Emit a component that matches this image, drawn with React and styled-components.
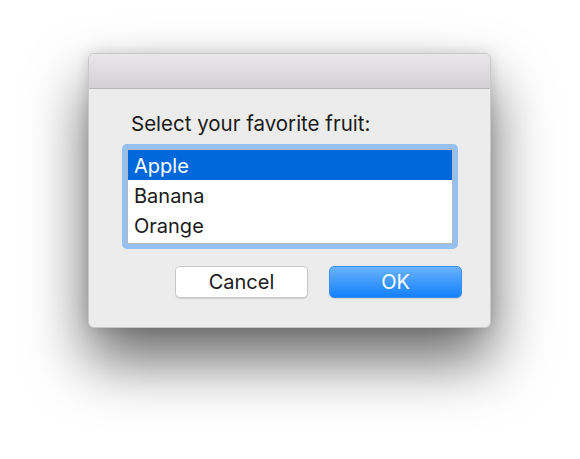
import React from 'react';
import styled, { createGlobalStyle } from 'styled-components';

const GlobalStyle = createGlobalStyle`
  html, body {
    margin: 0;
    padding: 0;
    background: #ffffff;
  }
  body {
    font-family: Inter, "Liberation Sans", sans-serif;
    -webkit-font-smoothing: antialiased;
  }
`;

const Stage = styled.div`
  width: 580px;
  height: 459px;
  padding: 53px 0 0 88px;
  box-sizing: border-box;
  overflow: hidden;
`;

const Window = styled.div`
  width: 403px;
  height: 275px;
  box-sizing: border-box;
  display: flex;
  flex-direction: column;
  background: #ececec;
  border: 1px solid #c9c9c9;
  border-radius: 6px;
  overflow: hidden;
  box-shadow: 0 32px 60px rgba(0, 0, 0, 0.6), 0 0 14px rgba(0, 0, 0, 0.14);
`;

const TitleBar = styled.div`
  height: 34px;
  flex-shrink: 0;
  background: linear-gradient(180deg, #e9e7e9 0%, #d3d1d3 100%);
  border-bottom: 1px solid #b9b7b9;
`;

const Content = styled.div`
  display: flex;
  flex-direction: column;
  padding: 23px 0 0 33px;
`;

const Label = styled.div`
  font-size: 20.5px;
  line-height: 24px;
  color: #1a1a1a;
  margin: 0 0 8px 9px;
`;

const FocusRing = styled.div`
  width: 336px;
  height: 105px;
  box-sizing: border-box;
  padding: 5px;
  background: #95c0f2;
  border-radius: 5px;
`;

const List = styled.ul`
  list-style: none;
  margin: 0;
  padding: 0 0 3px;
  height: 100%;
  box-sizing: border-box;
  background: #ffffff;
  border: 1px solid #b8b8b8;
`;

const Row = styled.li`
  height: 30px;
  box-sizing: border-box;
  padding: 3px 0 0 6px;
  line-height: 27px;
  font-size: 20px;
  color: ${p => (p.$selected ? '#ffffff' : '#1a1a1a')};
  background: ${p => (p.$selected ? '#0068da' : 'transparent')};
`;

const Actions = styled.div`
  display: flex;
  justify-content: flex-end;
  gap: 21px;
  padding: 17px 28px 0 0;
`;

const Button = styled.button`
  width: 133px;
  height: 32px;
  box-sizing: border-box;
  border-radius: 5px;
  font-family: inherit;
  font-size: 20px;
  padding: 0;
  cursor: pointer;
  color: ${p => (p.$primary ? '#ffffff' : '#1a1a1a')};
  background: ${p =>
    p.$primary ? 'linear-gradient(180deg, #6ab3fa 0%, #1380fd 100%)' : '#ffffff'};
  border: ${p => (p.$primary ? '1px solid #3d90f5' : '1px solid #c8c8c8')};
  box-shadow: 0 1px 1px rgba(0, 0, 0, 0.12);
`;

const fruits = ['Apple', 'Banana', 'Orange'];

const App = () => {
  return (
    <React.Fragment>
      <GlobalStyle />
      <Stage>
        <Window>
          <TitleBar />
          <Content>
            <Label>Select your favorite fruit:</Label>
            <FocusRing>
              <List>
                {fruits.map((f, i) => (
                  <Row key={f} $selected={i === 0}>{f}</Row>
                ))}
              </List>
            </FocusRing>
          </Content>
          <Actions>
            <Button>Cancel</Button>
            <Button $primary>OK</Button>
          </Actions>
        </Window>
      </Stage>
    </React.Fragment>
  );
};

export default App;
